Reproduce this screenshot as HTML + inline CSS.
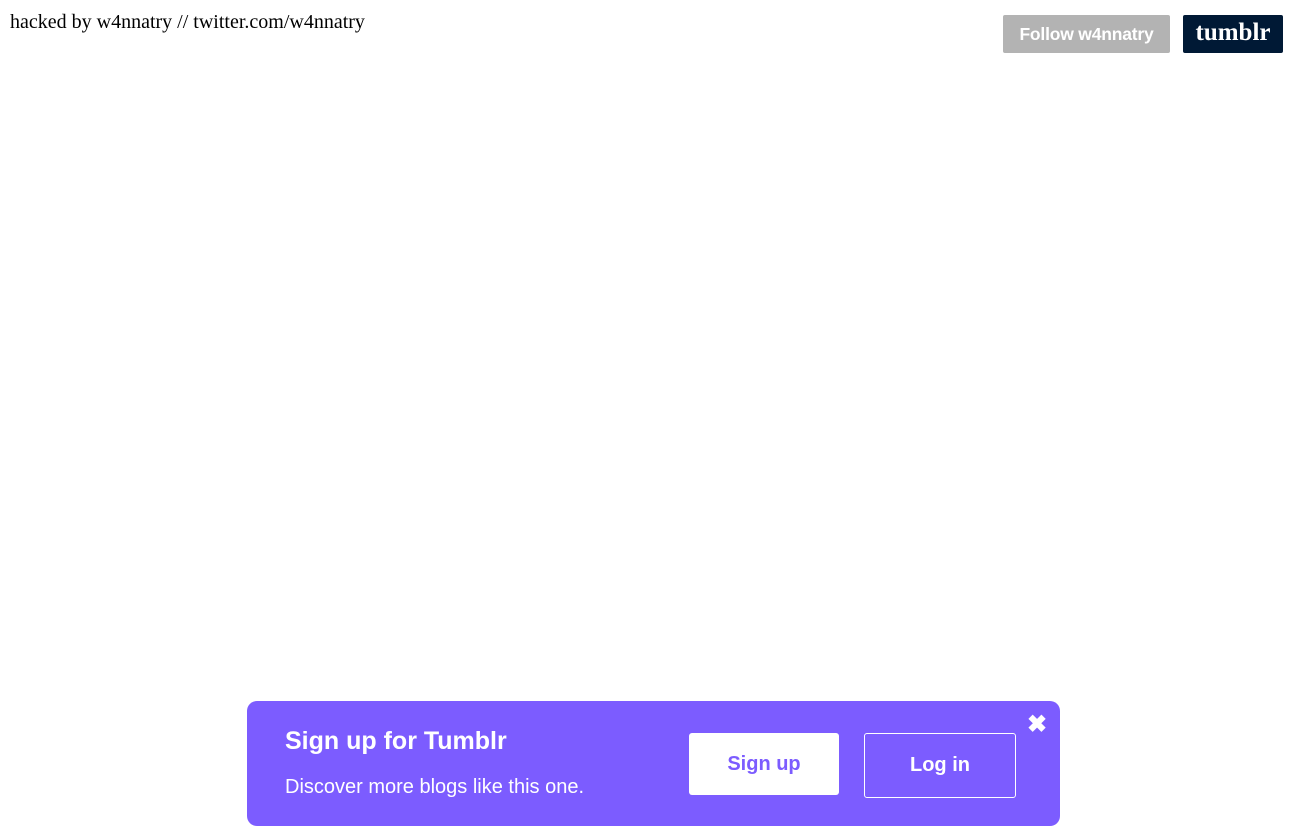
<!DOCTYPE html>
<html><head><style>
body{margin:0;width:1295px;height:832px;background:#fff;position:relative;overflow:hidden;font-family:"Liberation Sans",sans-serif}
.t{position:absolute;left:10px;top:11px;font-family:"Liberation Serif",serif;font-size:20px;color:#000}
.f{position:absolute;left:1003px;top:15px;width:167px;height:38px;background:#b3b3b3;border-radius:2px;color:#fff;font-weight:bold;font-size:17.5px;line-height:38px;text-align:center;letter-spacing:-0.2px}
.tb{position:absolute;left:1183px;top:15px;width:100px;height:38px;background:#001935;border-radius:2px;color:#fff;font-weight:bold;font-family:"Liberation Serif",serif;font-size:25px;line-height:36px;text-align:center}
.b{position:absolute;left:247px;top:701px;width:813px;height:125px;background:#7c5cff;border-radius:10px;color:#fff}
.h{position:absolute;left:38px;top:26px;font-size:25px;font-weight:bold}
.s{position:absolute;left:38px;top:75px;font-size:20px}
.su{position:absolute;left:442px;top:32px;width:150px;height:62px;background:#fff;border-radius:3px;color:#7c5cff;font-weight:bold;font-size:20px;line-height:62px;text-align:center}
.li{position:absolute;left:617px;top:32px;width:150px;height:63px;border:1px solid #fff;border-radius:3px;font-weight:bold;font-size:20px;line-height:63px;text-align:center}
.x{position:absolute;left:780px;top:9px;font-size:24px;font-weight:bold}
</style></head><body>
<div class="t">hacked by w4nnatry // twitter.com/w4nnatry</div>
<div class="f">Follow w4nnatry</div>
<div class="tb">tumblr</div>
<div class="b"><div class="h">Sign up for Tumblr</div><div class="s">Discover more blogs like this one.</div>
<div class="su">Sign up</div><div class="li">Log in</div><div class="x">✖</div></div>
</body></html>
